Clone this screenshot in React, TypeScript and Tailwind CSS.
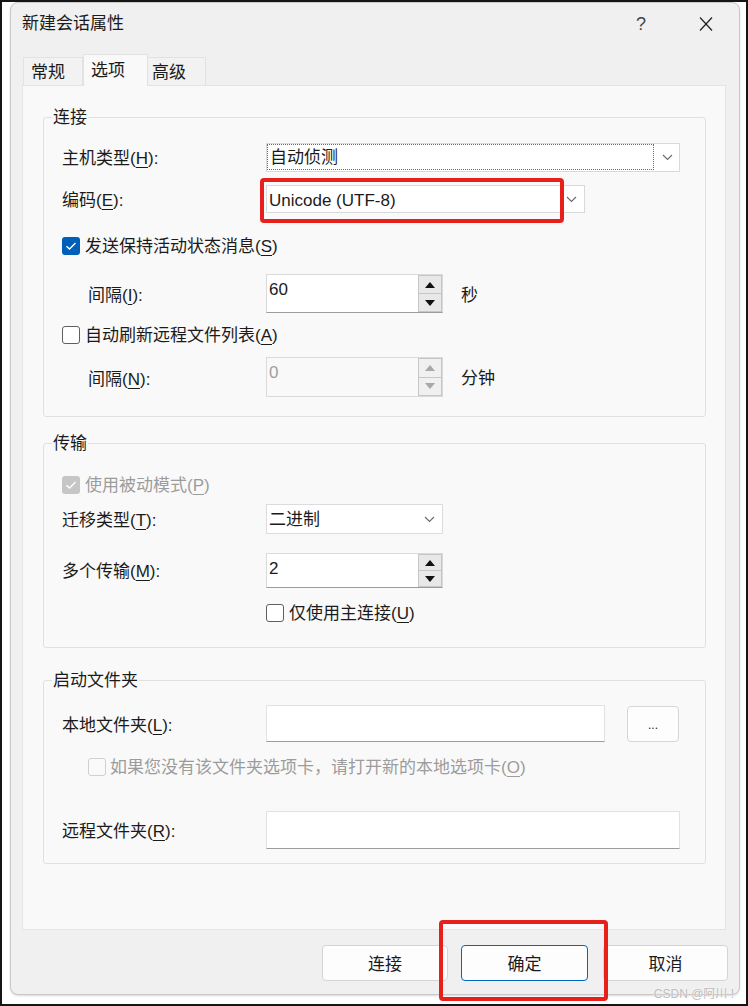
import React from 'react'

const FONT = "font-['Liberation_Sans','Noto_Sans_CJK_SC',sans-serif]"

// label with underlined access key, e.g. 主机类型(H):
function Mn({ text, k, colon = false }: { text: string; k: string; colon?: boolean }) {
  return (
    <span className="whitespace-nowrap">
      {text}(<span className="underline underline-offset-[3px] decoration-1">{k}</span>){colon ? ':' : ''}
    </span>
  )
}

function Chevron() {
  return (
    <svg width="11" height="7" viewBox="0 0 11 7" className="shrink-0">
      <polyline points="1,1 5.5,5.5 10,1" fill="none" stroke="#6a6a6a" strokeWidth="1.1" />
    </svg>
  )
}

function Box({ checked = false, disabled = false }: { checked?: boolean; disabled?: boolean }) {
  if (checked) {
    return (
      <span
        className={`w-[18px] h-[18px] rounded-[3px] flex items-center justify-center shrink-0 ${
          disabled ? 'bg-[#c6c6c6]' : 'bg-[#005fb8]'
        }`}
      >
        <svg width="12" height="10" viewBox="0 0 12 10">
          <polyline points="1.5,5.2 4.5,8 10.5,2" fill="none" stroke="#fff" strokeWidth="1.4" />
        </svg>
      </span>
    )
  }
  return (
    <span
      className={`w-[18px] h-[18px] rounded-[3px] border shrink-0 ${
        disabled ? 'border-[#d0d0d0] bg-[#fafafa]' : 'border-[#5f5f5f] bg-white'
      }`}
    />
  )
}

function Spin({ value, disabled = false, h }: { value: string; disabled?: boolean; h: string }) {
  const tri = disabled ? '#a8a8a8' : '#111'
  return (
    <div className={`w-[177px] ${h} flex border border-[#dadada] ${disabled ? 'bg-[#f9f9f9]' : 'bg-white border-b-[#9c9c9c]'}`}>
      <div className={`flex-1 pl-[2px] pt-[3px] ${disabled ? 'text-[#a0a0a0]' : ''}`}>{value}</div>
      <div className="w-[24px] flex flex-col">
        <div className={`flex-1 flex items-center justify-center border border-[#c6c6c6] ${disabled ? 'bg-[#f0f0f0]' : 'bg-[#e8e8e8]'}`}>
          <svg width="10" height="6" viewBox="0 0 10 6"><polygon points="0,6 10,6 5,0" fill={tri} /></svg>
        </div>
        <div className={`flex-1 flex items-center justify-center border border-t-0 border-[#c6c6c6] ${disabled ? 'bg-[#f0f0f0]' : 'bg-[#e8e8e8]'}`}>
          <svg width="10" height="6" viewBox="0 0 10 6"><polygon points="0,0 10,0 5,6" fill={tri} /></svg>
        </div>
      </div>
    </div>
  )
}

function Group({ title, className, children }: { title: string; className: string; children: React.ReactNode }) {
  return (
    <div className={`relative w-[663px] border border-[#e0e0e0] rounded-[3px] flex flex-col ${className}`}>
      <span className="absolute left-[8px] top-[-11px] px-[1px] bg-[#f9f9f9] leading-[22px]">{title}</span>
      {children}
    </div>
  )
}

export default function App() {
  return (
    <div className={`relative w-[748px] h-[1006px] border-2 border-[#151515] bg-white overflow-hidden text-[17px] leading-[24px] text-[#1b1b1b] ${FONT}`}>
      <div className="ml-[8px] w-[730px] h-[993px] rounded-[8px] border border-[#c9c9c9] bg-[#f0f0f0] flex flex-col shadow-[0_1px_2px_rgba(0,0,0,0.15)]">
        {/* title bar */}
        <div className="h-[41px] flex items-center pl-[11px] pr-[25px]">
          <span className="pt-[1px]">新建会话属性</span>
          <span className="ml-auto w-[20px] text-center text-[18px] font-light text-[#444]">?</span>
          <svg width="16" height="16" viewBox="0 0 16 16" className="ml-[47px]">
            <line x1="2" y1="1.5" x2="14" y2="14.5" stroke="#222" strokeWidth="1.2" />
            <line x1="14" y1="1.5" x2="2" y2="14.5" stroke="#222" strokeWidth="1.2" />
          </svg>
        </div>

        {/* tabs */}
        <div className="mt-[10px] pl-[12px] h-[31px] flex items-end relative z-10">
          <div className="w-[60px] h-[28px] flex items-center pl-[7px] pt-[2px] border border-b-0 border-[#e2e2e2] bg-[#f2f2f2]">常规</div>
          <div className="w-[65px] h-[32px] mb-[-1px] flex items-center pl-[7px] border border-b-0 border-[#e2e2e2] bg-[#f9f9f9]">选项</div>
          <div className="w-[58px] h-[28px] flex items-center pl-[4px] pt-[2px] border border-b-0 border-l-0 border-[#e2e2e2] bg-[#f2f2f2]">高级</div>
        </div>

        {/* panel */}
        <div className="ml-[11px] w-[704px] h-[845px] bg-[#f9f9f9] border border-[#e4e4e4] pl-[20px] flex flex-col">
          <Group title="连接" className="mt-[31px] pb-[19px]">
            <div className="mt-[25px] h-[29px] flex items-center">
              <span className="w-[222px] pl-[18px] pt-[3px]"><Mn text="主机类型" k="H" colon /></span>
              <div className="w-[414px] h-[29px] flex items-center bg-white border border-[#d9d9d9]">
                <div className="w-[387px] h-[26px] self-start border border-dotted border-[#6a6a6a] pl-[2px] pt-[1px] leading-[24px]">自动侦测</div>
                <span className="ml-[8px]"><Chevron /></span>
              </div>
            </div>
            <div className="mt-[13px] h-[28px] flex items-center">
              <span className="w-[222px] pl-[18px] pt-[3px]"><Mn text="编码" k="E" colon /></span>
              <div className="relative w-[319px] h-[28px] flex items-center bg-white border border-[#d9d9d9]">
                <span className="pl-[2px] pt-[3px] flex-1">Unicode (UTF-8)</span>
                <span className="mr-[7px]"><Chevron /></span>
                <span className="absolute left-[-7px] top-[-8px] w-[304px] h-[45px] border-[4px] border-[#e8201c] rounded-[4px]" />
              </div>
            </div>
            <div className="mt-[21px] h-[24px] flex items-center pl-[18px] gap-[5px]">
              <Box checked />
              <span className="pt-[2px]"><Mn text="发送保持活动状态消息" k="S" /></span>
            </div>
            <div className="mt-[16px] flex items-center">
              <span className="w-[222px] pl-[44px] mt-[5px]"><Mn text="间隔" k="I" colon /></span>
              <Spin value="60" h="h-[39px]" />
              <span className="ml-[18px] mt-[4px]">秒</span>
            </div>
            <div className="mt-[10px] h-[24px] flex items-center pl-[18px] gap-[5px]">
              <Box />
              <span className="pt-[2px]"><Mn text="自动刷新远程文件列表" k="A" /></span>
            </div>
            <div className="mt-[10px] flex items-center">
              <span className="w-[222px] pl-[44px] mt-[5px]"><Mn text="间隔" k="N" colon /></span>
              <Spin value="0" disabled h="h-[40px]" />
              <span className="ml-[18px] mt-[4px]">分钟</span>
            </div>
          </Group>

          <Group title="传输" className="mt-[26px] pb-[22px]">
            <div className="mt-[29px] h-[24px] flex items-center pl-[18px] gap-[5px] text-[#9c9c9c]">
              <Box checked disabled />
              <span className="pt-[2px]"><Mn text="使用被动模式" k="P" /></span>
            </div>
            <div className="mt-[7px] flex items-center">
              <span className="w-[222px] pl-[18px] mt-[4px]"><Mn text="迁移类型" k="T" colon /></span>
              <div className="w-[177px] h-[30px] flex items-center bg-white border border-[#dcdcdc]">
                <span className="flex-1 pl-[2px] pt-[2px]">二进制</span>
                <span className="mr-[7px]"><Chevron /></span>
              </div>
            </div>
            <div className="mt-[19px] flex items-center">
              <span className="w-[222px] pl-[18px] pt-[3px]"><Mn text="多个传输" k="M" colon /></span>
              <Spin value="2" h="h-[35px]" />
            </div>
            <div className="mt-[13px] h-[24px] flex items-center pl-[222px] gap-[5px]">
              <Box />
              <span className="pt-[2px]"><Mn text="仅使用主连接" k="U" /></span>
            </div>
          </Group>

          <Group title="启动文件夹" className="mt-[32px] pb-[14px]">
            <div className="mt-[24px] flex items-center">
              <span className="w-[222px] pl-[18px] pt-[4px]"><Mn text="本地文件夹" k="L" colon /></span>
              <div className="w-[339px] h-[37px] bg-white border border-[#e2e2e2] border-b-[#9c9c9c]" />
              <div className="ml-[22px] w-[52px] h-[36px] rounded-[4px] bg-[#fdfdfd] border border-[#d6d6d6] flex items-center justify-center text-[12px] leading-[12px] pt-[3px]">...</div>
            </div>
            <div className="mt-[13px] h-[24px] flex items-center pl-[44px] gap-[4px] text-[#9c9c9c]">
              <Box disabled />
              <span className="pt-[2px]"><Mn text="如果您没有该文件夹选项卡，请打开新的本地选项卡" k="O" /></span>
            </div>
            <div className="mt-[32px] flex items-center">
              <span className="w-[222px] pl-[18px] pt-[3px]"><Mn text="远程文件夹" k="R" colon /></span>
              <div className="w-[414px] h-[38px] bg-white border border-[#e2e2e2] border-b-[#9c9c9c]" />
            </div>
          </Group>
        </div>

        {/* buttons */}
        <div className="mt-[15px] flex justify-end pr-[11px]">
          <div className="w-[126px] h-[36px] rounded-[4px] bg-[#fdfdfd] border border-[#d4d4d4] flex items-center justify-center pt-[3px]">连接</div>
          <div className="relative ml-[13px] w-[127px] h-[36px] rounded-[4px] bg-[#fdfdfd] border border-[#0067c0] flex items-center justify-center pt-[3px]">
            确定
            <span className="absolute left-[-23px] top-[-26px] w-[169px] h-[81px] border-[4px] border-[#e8201c] rounded-[4px]" />
          </div>
          <div className="ml-[15px] w-[125px] h-[36px] rounded-[4px] bg-[#fdfdfd] border border-[#d4d4d4] flex items-center justify-center pt-[3px]">取消</div>
        </div>
      </div>

      <span className="absolute right-[12px] bottom-[3px] text-[12px] leading-[14px] text-[#bdbdbd] [text-shadow:0_0_2px_#fff]">CSDN @阿川 !</span>
    </div>
  )
}
